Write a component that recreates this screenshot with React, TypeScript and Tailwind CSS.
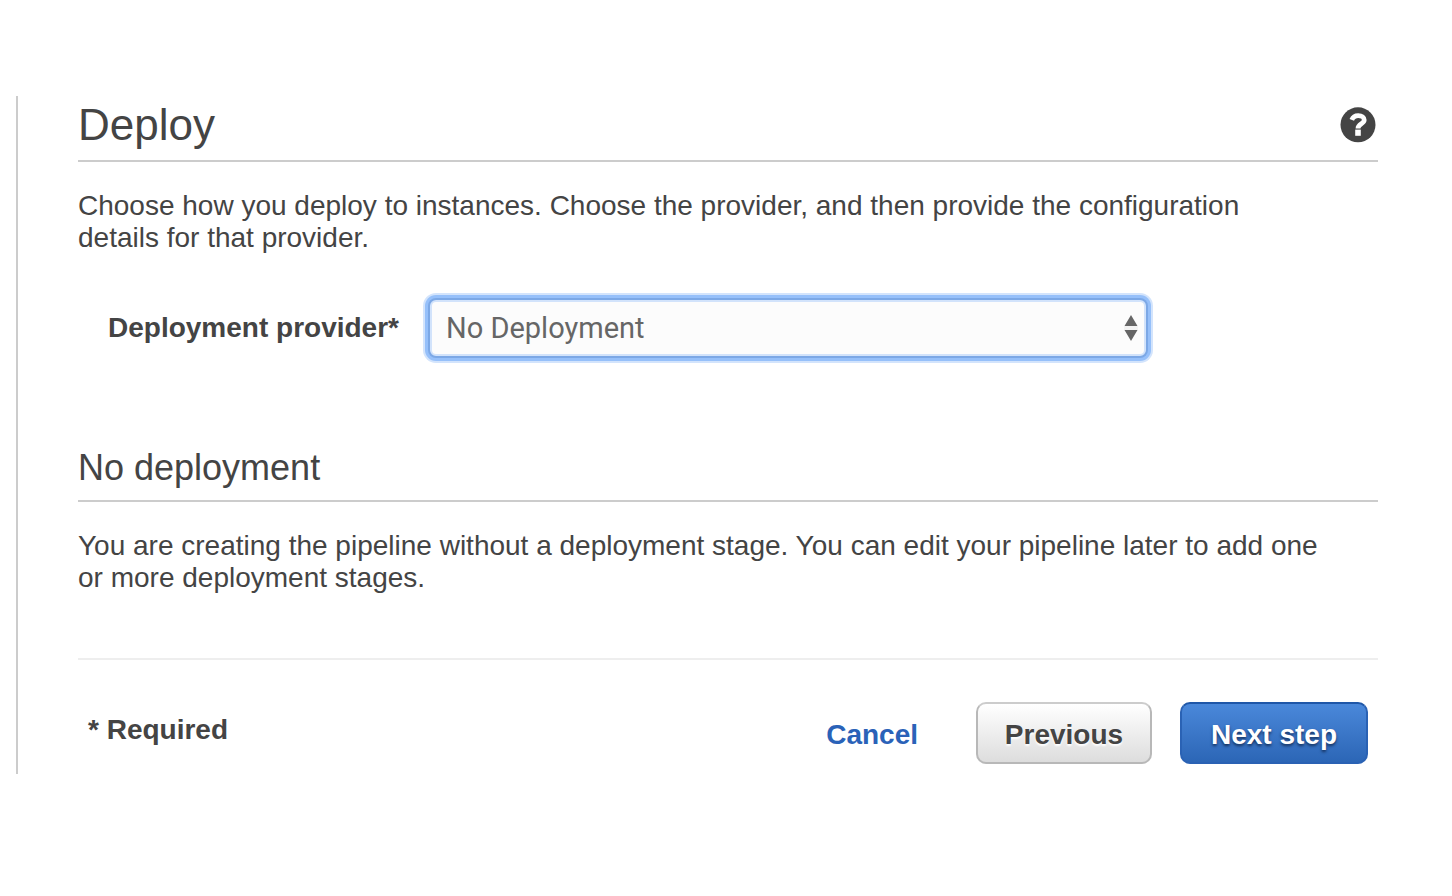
import React from "react";

function HelpIcon() {
  return (
    <svg viewBox="0 0 36 36" className="size-9" aria-hidden="true">
      <circle cx="18" cy="17.8" r="17.5" fill="#444444" />
      <path d="M11.8 12.9C13 9.8 15.2 8.7 18.3 8.7C22 8.7 24.2 10.3 24.2 13C24.2 16.8 18 16.7 18 21.4" fill="none" stroke="white" strokeWidth="4.8" />
      <path d="M15.2 22.6h5.6v6.2h-5.6z" fill="white" />
    </svg>
  );
}

export default function App() {
  return (
    <div className="min-h-screen bg-white pt-24 pl-4 pr-[74px] font-['Liberation_Sans',Arial,sans-serif] text-[28px] leading-8 text-[#444444]">
      <main className="border-l-2 border-[#cccccc] pb-2.5 pl-[60px]">
        <header className="flex h-[66px] items-center justify-between border-b-2 border-[#cccccc] pb-1.5">
          <h1 className="text-[44px] leading-[56px]">Deploy</h1>
          <button type="button" aria-label="Help" className="mr-0.5">
            <HelpIcon />
          </button>
        </header>
        <p className="mt-7 max-w-[1200px]">
          Choose how you deploy to instances. Choose the provider, and then provide the configuration details for that
          provider.
        </p>
        <div className="mt-[46px] flex items-center pl-[30px]">
          <label htmlFor="provider" className="w-[322px] font-bold">
            Deployment provider*
          </label>
          <div className="relative w-[716px]">
            <select
              id="provider"
              defaultValue="none"
              className="block h-14 w-full appearance-none rounded-md border-2 border-[#d2e3fb] bg-[#fcfcfc] pl-3.5 font-['Roboto',sans-serif] text-[29px] text-[#666666] shadow-[0_0_0_2px_#7ca8e6,0_0_0_5px_#96c0fa,0_0_0_7px_#d3e4fc] outline-none"
            >
              <option value="none">No Deployment</option>
            </select>
            <svg viewBox="0 0 14 26" className="pointer-events-none absolute top-[15px] right-2 h-[26px] w-3.5" aria-hidden="true">
              <path d="M0 11H14V15H0Z" fill="#f2f2f2" />
              <path d="M7 0L13.5 11H0.5ZM0.5 15H13.5L7 26Z" fill="#666666" />
            </svg>
          </div>
        </div>
        <section className="mt-[86px]">
          <h2 className="flex h-[60px] items-center border-b-2 border-[#cccccc] pb-1.5 text-[36px] leading-[44px]">
            No deployment
          </h2>
          <p className="mt-7 max-w-[1264px]">
            You are creating the pipeline without a deployment stage. You can edit your pipeline later to add one or more
            deployment stages.
          </p>
        </section>
        <footer className="mt-16 flex justify-between border-t-2 border-[#eeeeee] px-2.5 pt-[42px] font-bold">
          <p className="pt-3">* Required</p>
          <div className="flex items-center">
            <a href="#cancel" className="mr-[58px] pt-1 text-[#2a62b8]">
              Cancel
            </a>
            <button
              type="button"
              className="mr-7 h-[62px] w-44 rounded-[10px] border-2 border-[#b8b8b8] border-t-[#cccccc] bg-linear-to-b from-white to-[#dddddd] pt-1 text-shadow-[0_2px_2px_#ffffff]"
            >
              Previous
            </button>
            <button
              type="button"
              className="h-[62px] w-[188px] rounded-[10px] border-2 border-[#2a62b4] border-t-[#1f57a8] bg-linear-to-b from-[#4a88da] to-[#2c66b6] pt-1 text-white text-shadow-[0_2px_3px_#14305c]"
            >
              Next step
            </button>
          </div>
        </footer>
      </main>
    </div>
  );
}
